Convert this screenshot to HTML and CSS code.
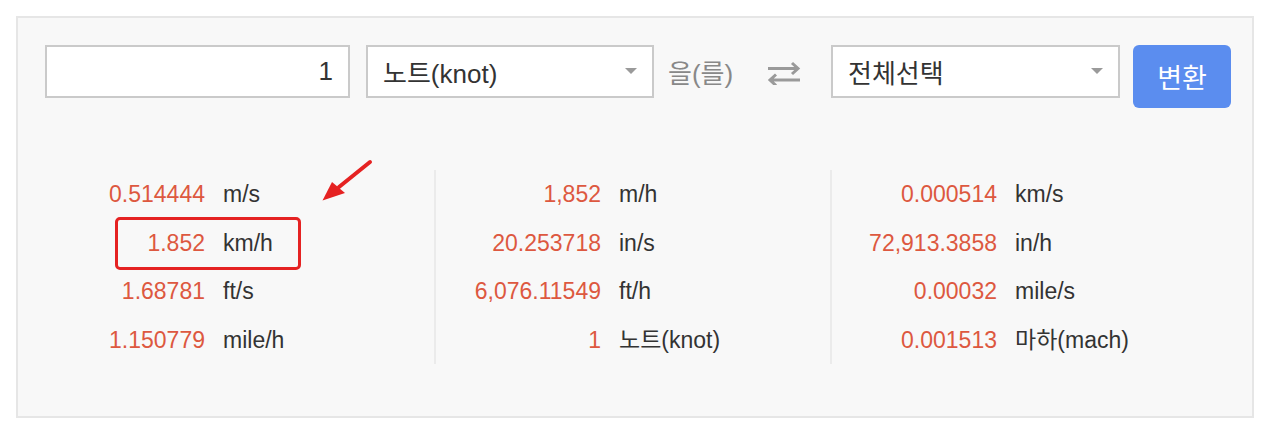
FILE: index.html
```html
<!DOCTYPE html>
<html lang="ko">
<head>
<meta charset="utf-8">
<title>속도 단위 변환</title>
<link rel="stylesheet" href="styles.css">
</head>
<body>

<div class="converter">
    <div class="toolbar">
        <input class="amount" type="text" value="1">
        <div class="select from">
            <span class="select-text">노트(knot)</span>
            <span class="caret"></span>
        </div>
        <div class="particle">을(를)</div>
        <div class="swap" title="바꾸기">
            <svg width="34" height="24" viewBox="0 0 34 24">
                <path d="M1 7.5 H31 M25 2 L31 7.5 L25 13" fill="none" stroke="#9a9a9a" stroke-width="3"/>
                <path d="M33 19 H3 M9 13.5 L3 19 L9 24.5" fill="none" stroke="#9a9a9a" stroke-width="3"/>
            </svg>
        </div>
        <div class="select to">
            <span class="select-text">전체선택</span>
            <span class="caret"></span>
        </div>
        <button class="convert">변환</button>
    </div>

    <div class="results">
        <div class="col">
            <div class="row"><span class="num">0.514444</span><span class="unit">m/s</span></div>
            <div class="row"><span class="num">1.852</span><span class="unit">km/h</span></div>
            <div class="row"><span class="num">1.68781</span><span class="unit">ft/s</span></div>
            <div class="row"><span class="num">1.150779</span><span class="unit">mile/h</span></div>
        </div>
        <div class="col">
            <div class="row"><span class="num">1,852</span><span class="unit">m/h</span></div>
            <div class="row"><span class="num">20.253718</span><span class="unit">in/s</span></div>
            <div class="row"><span class="num">6,076.11549</span><span class="unit">ft/h</span></div>
            <div class="row"><span class="num">1</span><span class="unit">노트(knot)</span></div>
        </div>
        <div class="col">
            <div class="row"><span class="num">0.000514</span><span class="unit">km/s</span></div>
            <div class="row"><span class="num">72,913.3858</span><span class="unit">in/h</span></div>
            <div class="row"><span class="num">0.00032</span><span class="unit">mile/s</span></div>
            <div class="row"><span class="num">0.001513</span><span class="unit">마하(mach)</span></div>
        </div>
    </div>

    <div class="highlight"></div>
    <svg class="pointer" width="70" height="60" viewBox="0 0 70 60">
        <line x1="60" y1="12" x2="29" y2="37" stroke="#e52222" stroke-width="4" stroke-linecap="round"/>
        <polygon points="12.5,50.5 22,32 35,43" fill="#e52222"/>
    </svg>
</div>

</body>
</html>
```

FILE: styles.css
```css
body {
    margin: 0;
    padding: 16px 25px 24px 16px;
    background-color: #fff;
    font-family: "Liberation Sans", Arial, "Noto Sans CJK KR", sans-serif;
    color: #333;
}

.converter {
    position: relative;
    background-color: #f8f8f8;
    border: 2px solid #e6e6e6;
    padding: 27px 0 50px 0;
    height: 321px;
}

.toolbar {
    display: flex;
    align-items: flex-start;
    padding-left: 27px;
}

.amount {
    box-sizing: border-box;
    width: 305px;
    height: 53px;
    margin: 0;
    padding: 0 15px 0 12px;
    border: 2px solid #cacaca;
    background: #fff;
    font-family: inherit;
    font-size: 26px;
    color: #333;
    text-align: right;
    outline: none;
}

.select {
    box-sizing: border-box;
    height: 53px;
    border: 2px solid #cacaca;
    background: #fff;
    display: flex;
    align-items: center;
    justify-content: space-between;
    padding: 0 15px 0 15px;
    font-size: 26px;
    color: #333;
}
.select.from {
    width: 288px;
    margin-left: 16px;
}
.select.to {
    width: 289px;
    margin-left: 30px;
}
.caret {
    width: 0;
    height: 0;
    border-left: 6.5px solid transparent;
    border-right: 6.5px solid transparent;
    border-top: 6px solid #9a9a9a;
    margin-top: -2px;
}

.particle {
    width: 74px;
    height: 53px;
    display: flex;
    align-items: center;
    margin-left: 14px;
    font-size: 26px;
    color: #888;
}

.swap {
    height: 53px;
    display: flex;
    align-items: center;
    margin-left: 25px;
    padding-top: 2px;
    box-sizing: border-box;
}

.convert {
    appearance: none;
    -webkit-appearance: none;
    margin-left: 13px;
    width: 98px;
    height: 63px;
    border: 0;
    border-radius: 6px;
    background-color: #5b8def;
    color: #fff;
    font-family: inherit;
    font-size: 27px;
    cursor: pointer;
}

.results {
    display: flex;
    margin-top: 62px;
    padding: 0 26px 0 20px;
}
.col {
    width: 396px;
    box-sizing: border-box;
}
.col + .col {
    border-left: 2px solid #ebebeb;
}
.row {
    display: flex;
    height: 48.5px;
    line-height: 48.5px;
    font-size: 23px;
}
.num {
    width: 167px;
    text-align: right;
    color: #dd5840;
}
.col + .col .num {
    width: 165px;
}
.unit {
    margin-left: 18px;
    color: #333;
}

.highlight {
    position: absolute;
    left: 97px;
    top: 199px;
    width: 180px;
    height: 47px;
    border: 3px solid #e52222;
    border-radius: 5px;
}
.pointer {
    position: absolute;
    left: 292px;
    top: 132px;
}
```
